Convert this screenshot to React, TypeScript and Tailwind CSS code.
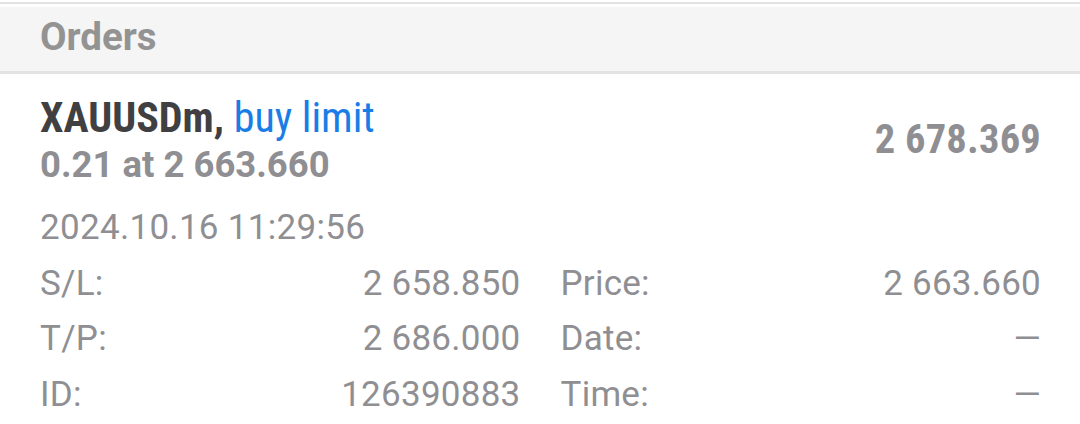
import React from "react";

const rows: [string, string, string, string][] = [
  ["S/L:", "2 658.850", "Price:", "2 663.660"],
  ["T/P:", "2 686.000", "Date:", "—"],
  ["ID:", "126390883", "Time:", "—"],
];

export default function App() {
  return (
    <div className="w-[1080px] h-[424px] bg-white overflow-hidden pt-[2px] font-['Roboto',sans-serif]">
      <div className="h-[2px] bg-[#e3e3e3]" />
      <div className="h-[3px] bg-white" />
      <div className="h-[64px] bg-[#f5f5f5] border-b-[3px] border-[#e3e3e3] box-content pl-[40px]">
        <div className="text-[38.5px] leading-[60px] font-bold text-[#939393]">Orders</div>
      </div>
      <div className="pl-[40px] pr-[39px] pt-[18px]">
        <div className="flex items-center justify-between">
          <div>
            <div className="font-['Roboto_Condensed',Roboto,sans-serif] font-stretch-condensed text-[42px] leading-[52px] font-bold text-[#404042]">
              XAUUSDm, <span className="font-normal text-[#1a7de6]">buy limit</span>
            </div>
            <div className="text-[36.5px] leading-[42px] font-bold text-[#8f8f93]">0.21 at 2 663.660</div>
          </div>
          <div className="font-['Roboto_Condensed',Roboto,sans-serif] font-stretch-condensed text-[40.5px] leading-[40px] font-bold tracking-[0.2px] text-[#8f8f93]">
            2 678.369
          </div>
        </div>
        <div className="mt-[14px] text-[35px] leading-[55.5px] tracking-[0.3px] text-[#8f8f93]">2024.10.16 11:29:56</div>
        <div className="grid grid-cols-2 gap-x-[40px] text-[35px] leading-[55.5px] tracking-[0.25px] text-[#8f8f93]">
          {rows.map((r, i) => (
            <React.Fragment key={i}>
              <div className="flex justify-between">
                <span>{r[0]}</span>
                <span>{r[1]}</span>
              </div>
              <div className="flex justify-between">
                <span>{r[2]}</span>
                <span>{r[3]}</span>
              </div>
            </React.Fragment>
          ))}
        </div>
      </div>
    </div>
  );
}
